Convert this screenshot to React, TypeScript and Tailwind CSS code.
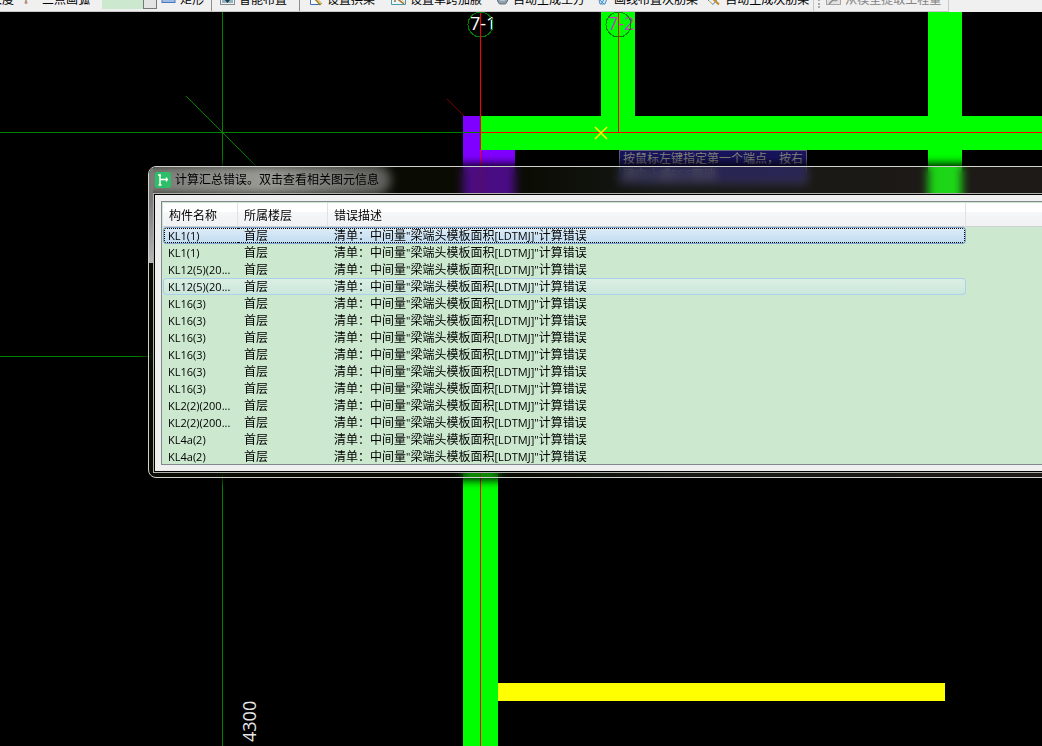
import type { ReactNode } from "react";
import clsx from "clsx";

interface ErrorRow {
  name: string;
  state?: "selected" | "hover";
}

const ROWS: ErrorRow[] = [
  { name: "KL1(1)", state: "selected" },
  { name: "KL1(1)" },
  { name: "KL12(5)(20..." },
  { name: "KL12(5)(20...", state: "hover" },
  { name: "KL16(3)" },
  { name: "KL16(3)" },
  { name: "KL16(3)" },
  { name: "KL16(3)" },
  { name: "KL16(3)" },
  { name: "KL16(3)" },
  { name: "KL2(2)(200..." },
  { name: "KL2(2)(200..." },
  { name: "KL4a(2)" },
  { name: "KL4a(2)" },
];

const Icon = ({ children }: { children: ReactNode }) => (
  <svg className="h-4 w-4 shrink-0" viewBox="0 0 16 16" fill="none">
    {children}
  </svg>
);

const ArrowIcon = () => (
  <Icon>
    <path d="M8 3v7" stroke="#555" />
    <rect x="6.5" y="9" width="3" height="3" rx="1.5" fill="#c98b78" />
  </Icon>
);

const RectIcon = () => (
  <Icon>
    <rect x="1" y="3" width="13" height="7.5" fill="#9dbbe6" stroke="#4a78bd" />
  </Icon>
);

const SmartIcon = () => (
  <Icon>
    <rect x="0.5" y="2.5" width="14" height="10" stroke="#222" strokeDasharray="1 1" />
    <rect x="2" y="4" width="11" height="7" fill="#8fb5c4" />
    <path d="M5 8h5l-2.5 3z" fill="#1d3c4a" />
  </Icon>
);

const EditIcon = () => (
  <Icon>
    <path d="M3 2h9v10H3z" fill="#f7fbff" />
    <path d="M2.5 2v10.5h10" stroke="#3b6ea5" />
    <path d="M6 5l7 7.5" stroke="#a08030" strokeWidth="3" />
    <path d="M7 5l6 6.5" stroke="#f0cc74" strokeWidth="1.5" />
  </Icon>
);

const HaunchIcon = () => (
  <Icon>
    <path d="M0.5 3v9.5h14V3" fill="#e8f6fa" stroke="#4a9aac" />
    <path d="M4 3v7M4 5l9 7" stroke="#a86f2c" strokeWidth="1.5" />
    <path d="M8 5l6 6" stroke="#f0cc74" />
  </Icon>
);

const BeamIcon = () => (
  <Icon>
    <path d="M3.5 4h10v5l-2 3h-6l-2-3z" fill="#91a0ab" stroke="#607080" />
    <path d="M6 8h5" stroke="#dfe7ec" />
  </Icon>
);

const RibIcon = () => (
  <Icon>
    <path d="M3 3l2 9h5l3-8" fill="#cfe7f8" stroke="#4c90c4" />
    <path d="M5 8l4 4M10 6l-4 6" stroke="#4c90c4" />
  </Icon>
);

const SearchRibIcon = () => (
  <Icon>
    <path d="M2 8l5 4.5L13 5" stroke="#4c90c4" />
    <path d="M5 5l8 7.5" stroke="#c08a28" strokeWidth="2" />
    <path d="M3 9l3 3" stroke="#e3ae51" />
  </Icon>
);

const ExtractIcon = () => (
  <Icon>
    <rect x="0.5" y="1.5" width="14" height="11" fill="#e2e2e2" stroke="#a5a5a5" />
    <circle cx="9" cy="6" r="3" stroke="#888" />
    <path d="M7 8l-4 4" stroke="#888" strokeWidth="1.5" />
  </Icon>
);

interface ToolButtonProps {
  icon?: ReactNode;
  label: string;
  className?: string;
  disabled?: boolean;
}

const ToolButton = ({ icon, label, className, disabled }: ToolButtonProps) => (
  <button
    disabled={disabled}
    className={clsx(
      "flex shrink-0 items-center gap-[3px] px-1 whitespace-nowrap",
      disabled ? "text-[#838383]" : "text-black",
      className
    )}
  >
    {icon}
    {label}
  </button>
);

const Separator = () => <div className="h-full w-px shrink-0 bg-[#8d8d8d]" />;

// Only the lower edge of the toolbar is in view
const Toolbar = () => (
  <header className="flex h-3 shrink-0 flex-col justify-end overflow-hidden bg-[#f0f0f0] text-xs">
    <div className="flex h-6 w-[949px] shrink-0 items-center border-r border-b border-[#c8c8c8]">
      <div className="-ml-2.5 flex shrink-0 items-center">
        <ToolButton label="长度" className="pl-0" />
        <ArrowIcon />
      </div>
      <ToolButton label="三点画弧" className="ml-1" />
      <div className="ml-2 flex h-[18px] w-[55px] shrink-0 bg-[#cce8cf]">
        <input aria-label="弧半径" className="w-[41px] bg-[#cce8cf]" />
        <button aria-label="展开" className="flex-1 border border-[#777] bg-[#e4e4e4]" />
      </div>
      <ToolButton icon={<RectIcon />} label="矩形" className="mr-[3px]" />
      <Separator />
      <ToolButton icon={<SmartIcon />} label="智能布置" className="mr-2 ml-1" />
      <Separator />
      <ToolButton icon={<EditIcon />} label="设置拱梁" className="mr-2 ml-1" />
      <ToolButton icon={<HaunchIcon />} label="设置单跨加腋" className="mr-1" />
      <ToolButton icon={<BeamIcon />} label="自动生成土方" className="mr-0.5" />
      <ToolButton icon={<RibIcon />} label="画线布置次肋梁" />
      <ToolButton icon={<SearchRibIcon />} label="自动生成次肋梁" />
      <div className="h-full w-px shrink-0 bg-[#c8c8c8]" />
      <div className="ml-1 h-4 shrink-0 border-l-2 border-dotted border-[#aaa]" />
      <ToolButton icon={<ExtractIcon />} label="从模型提取工程量" className="ml-0.5" disabled />
    </div>
  </header>
);

const Drawing = () => (
  <svg className="absolute inset-0 h-full w-full" shapeRendering="crispEdges" fill="none">
    {/* beams */}
    <rect x="463" y="104" width="17" height="34" fill="#8000ff" />
    <rect x="463" y="138" width="52" height="60" fill="#8000ff" />
    <rect x="480" y="104" width="100%" height="34" fill="#00ff00" />
    <rect x="601" y="0" width="34" height="104" fill="#00ff00" />
    <rect x="928" y="0" width="34" height="200" fill="#00ff00" />
    <rect x="463" y="440" width="35" height="100%" fill="#00ff00" />
    <rect x="498" y="671" width="447" height="18" fill="#ffff00" />

    {/* axes */}
    <path d="M0 120.5H480M222.5 0V2000M0 344.5H160" stroke="#008000" />
    <path d="M186 84l70 70" stroke="#008000" />
    <path d="M447 87l17 17" stroke="#800000" />
    <path d="M480.5 0V2000M618.5 0V120M480 120.5H4000" stroke="#ff0000" />

    <g fontFamily="Open Sans, sans-serif" fontSize="18">
      <text x="470" y="18" fill="#ffffff">7-1</text>
      <text x="608" y="18" fill="#c040c0">7-2</text>
      <text transform="translate(256 730) rotate(-90)" fill="#e8e8e8">4300</text>
    </g>
    <circle cx="480.5" cy="12.5" r="12.5" stroke="#008000" />
    <circle cx="618.5" cy="12.5" r="12.5" stroke="#008000" />
    <path d="M595 115l12 12M607 115l-12 12" stroke="#ffff00" strokeWidth="1.5" shapeRendering="auto" />
  </svg>
);

const cellState = (state: ErrorRow["state"]) =>
  clsx(
    "h-[17px] overflow-hidden p-0 whitespace-nowrap",
    state === "selected" &&
      "border-y border-[#7da2ce] bg-linear-to-b from-[#deecf5] to-[#c0dcf2] first:rounded-l-sm first:border-l",
    state === "hover" &&
      "border-y border-[#a9d1ea] bg-linear-to-b from-[#dcefe3] to-[#cbe6dc] first:rounded-l-sm first:border-l",
    !state && "border-y border-transparent first:border-l"
  );

const innerState = (state: ErrorRow["state"]) =>
  clsx(
    "flex h-[15px] items-center border-y pt-px",
    state === "selected" ? "border-dotted border-black" : "border-transparent"
  );

const ErrorTable = () => (
  <div className="h-[264px] overflow-hidden border border-[#828790] bg-[#cce8cf] pt-px pl-px">
    <table className="w-full table-fixed border-separate border-spacing-0 text-left text-xs leading-3 text-black">
      <colgroup>
        <col className="w-[75px]" />
        <col className="w-[90px]" />
        <col className="w-[638px]" />
        <col />
      </colgroup>
      <thead>
        <tr className="h-6">
          {["构件名称", "所属楼层", "错误描述", ""].map((title) => (
            <th
              key={title}
              className="border-r border-b border-r-[#e0e2e5] border-b-[#d0d0d4] bg-linear-to-b from-white from-40% via-[#f6f7f8] via-40% to-[#f0f1f3] px-1.5 pt-0.5 pb-0 font-normal"
            >
              {title}
            </th>
          ))}
        </tr>
      </thead>
      <tbody>
        {ROWS.map(({ name, state }, i) => (
          <tr key={i}>
            <td className={cellState(state)}>
              <div className={clsx(innerState(state), "border-l pl-[3px] text-[11px]")}>{name}</div>
            </td>
            <td className={cellState(state)}>
              <div className={clsx(innerState(state), "pl-1.5")}>首层</div>
            </td>
            <td className={clsx(cellState(state), "rounded-r-sm border-r")}>
              <div className={clsx(innerState(state), "border-r pl-1.5")}>
                清单：中间量
                <span className="text-[11px]">"</span>
                梁端头模板面积
                <span className="text-[11px]">[LDTMJ]"</span>
                计算错误
              </div>
            </td>
            <td />
          </tr>
        ))}
      </tbody>
    </table>
  </div>
);

const ErrorDialog = () => (
  <section
    aria-labelledby="dialog-title"
    className="absolute top-[154px] -right-10 left-[148px] overflow-hidden rounded-lg border border-[#d0d0cc] bg-linear-to-r from-[#141808]/50 from-40% via-[#40443a]/35 via-55% to-[#78685c]/25 to-90% shadow-[0_0_10px_2px_#000] backdrop-blur-[5px]"
  >
    <div className="absolute top-0 left-0 h-24 w-1 bg-linear-to-b from-[#60605c] via-[#88888a] to-[#b8b8b8]" />
    <div className="relative flex h-[26px] items-center gap-1 pl-1.5">
      <div className="absolute -inset-y-0.5 -left-2 w-[250px] rounded-r-full bg-linear-to-r from-[#787874] via-[#9a9a95] to-[#5c5c58] blur-[5px]" />
      <svg className="relative h-4 w-4" viewBox="0 0 16 16">
        <rect width="16" height="16" rx="2.5" fill="#2dbe68" />
        <path d="M3 3h3M5 3v10M3.5 13H6.5M5 7.5H13M11.5 5.5v4" stroke="#fff" strokeWidth="1.5" fill="none" />
      </svg>
      <h1 id="dialog-title" className="relative text-xs whitespace-nowrap text-black">
        计算汇总错误。双击查看相关图元信息
      </h1>
    </div>
    <div className="relative mx-1 mb-1 border border-[#b0b0ac]">
      <div className="border border-black bg-[#f0f0f0] p-1.5">
        <ErrorTable />
      </div>
    </div>
  </section>
);

export default function App() {
  return (
    <div className="flex h-screen flex-col overflow-hidden bg-black font-['Open_Sans','Noto_Sans_CJK_SC',sans-serif]">
      <Toolbar />
      <main className="relative flex-1 overflow-hidden bg-black">
        <Drawing />
        <div
          role="tooltip"
          className="absolute top-[138px] left-[619px] border border-[#606078] bg-[#18145c] px-[3px] text-xs whitespace-nowrap text-[#84847c]"
        >
          <p className="leading-4">按鼠标左键指定第一个端点，按右</p>
          <p className="leading-4">键中止或ESC取消</p>
        </div>
        <ErrorDialog />
      </main>
    </div>
  );
}
